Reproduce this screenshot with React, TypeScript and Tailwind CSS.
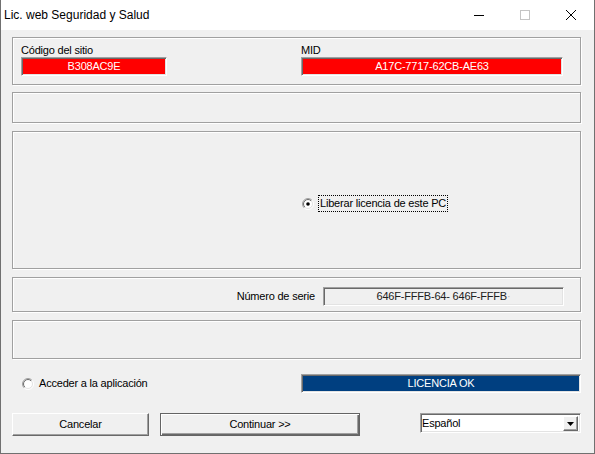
import React from 'react';

const FONT = { fontFamily: '"Liberation Sans", Arial, sans-serif' };

// classic 12px radio button
function Radio({ checked, id }: { checked?: boolean; id: string }) {
  return (
    <svg width="12" height="12" viewBox="0 0 12 12" className="shrink-0">
      <defs>
        <linearGradient id={`o${id}`} x1="0" y1="0" x2="1" y2="1">
          <stop offset="0.45" stopColor="#a0a0a0" />
          <stop offset="0.55" stopColor="#ffffff" />
        </linearGradient>
        <linearGradient id={`i${id}`} x1="0" y1="0" x2="1" y2="1">
          <stop offset="0.45" stopColor="#696969" />
          <stop offset="0.55" stopColor="#e3e3e3" />
        </linearGradient>
      </defs>
      <circle cx="6" cy="6" r="5.5" fill="none" stroke={`url(#o${id})`} />
      <circle cx="6" cy="6" r="4.5" fill="#fff" stroke={`url(#i${id})`} />
      {checked && <circle cx="6" cy="6" r="1.8" fill="#000" />}
    </svg>
  );
}

// sunken field: gray top/left, white bottom/right
const sunken =
  'border border-t-[#a0a0a0] border-l-[#a0a0a0] border-b-white border-r-white shadow-[inset_1px_1px_0_#696969,inset_-1px_-1px_0_#e3e3e3]';

const groupBox =
  'ml-[11px] w-[569px] border border-[#a0a0a0] shadow-[inset_1px_1px_0_#fff,1px_1px_0_#fff]';

export default function App() {
  return (
    <div
      className="w-[595px] h-[454px] flex flex-col bg-[#f0f0f0] border-l border-r border-b border-[#707070] text-[11px] tracking-[-0.2px] text-black overflow-hidden"
      style={FONT}
    >
      {/* title bar */}
      <div className="h-[30px] shrink-0 bg-white flex items-center">
        <span className="pl-[3px] text-[12px] tracking-normal">Lic. web Seguridad y Salud</span>
        <div className="ml-auto flex h-full">
          <div className="w-[46px] flex items-center justify-center">
            <div className="w-[10px] h-px bg-black" />
          </div>
          <div className="w-[46px] flex items-center justify-center">
            <div className="w-[10px] h-[10px] border border-[#c4c4c4]" />
          </div>
          <div className="w-[46px] flex items-center justify-center">
            <svg width="10" height="10" viewBox="0 0 10 10">
              <path d="M0 0L10 10M10 0L0 10" stroke="#000" strokeWidth="1" />
            </svg>
          </div>
        </div>
      </div>

      {/* site code / MID */}
      <div className={`${groupBox} mt-[7px] h-[48px] pt-[6px] pl-[8px] flex`}>
        <div className="w-[280px] flex flex-col">
          <span className="leading-[13px]">Código del sitio</span>
          <div className={`${sunken} w-[146px] h-[19px] bg-[#ff0000] text-white flex items-center justify-center`}>
            B308AC9E
          </div>
        </div>
        <div className="flex flex-col">
          <span className="leading-[13px]">MID</span>
          <div className={`${sunken} w-[262px] h-[19px] bg-[#ff0000] text-white flex items-center justify-center`}>
            A17C-7717-62CB-AE63
          </div>
        </div>
      </div>

      <div className={`${groupBox} mt-[7px] h-[31px]`} />

      {/* release licence */}
      <div className={`${groupBox} mt-[8px] h-[138px] pt-[63px] pl-[289px]`}>
        <div className="flex items-center gap-[4px]">
          <Radio checked id="a" />
          <span className="h-[17px] px-[1px] flex items-center border border-dotted border-black leading-none">
            Liberar licencia de este PC
          </span>
        </div>
      </div>

      {/* serial */}
      <div className={`${groupBox} mt-[8px] h-[35px] pt-[9px] pr-[16px] flex justify-end items-start gap-[8px]`}>
        <span className="h-[19px] flex items-center">Número de serie</span>
        <div className={`${sunken} w-[241px] h-[19px] flex items-center justify-center text-[#202020]`}>
          646F-FFFB-64- 646F-FFFB<span className="text-[#b0b0b0]">·</span>
        </div>
      </div>

      <div className={`${groupBox} mt-[8px] h-[39px]`} />

      {/* access + status */}
      <div className="mt-[15px] ml-[11px] w-[569px] h-[19px] flex items-center">
        <div className="ml-[10px] flex items-center gap-[5px]">
          <Radio id="b" />
          <span>Acceder a la aplicación</span>
        </div>
        <div className={`${sunken} ml-auto w-[280px] h-[19px] bg-[#003f80] text-white flex items-center justify-center`}>
          LICENCIA OK
        </div>
      </div>

      {/* buttons */}
      <div className="mt-[20px] ml-[11px] w-[569px] flex items-start">
        <button className="w-[137px] h-[23px] bg-[#f0f0f0] border border-t-white border-l-white border-b-[#696969] border-r-[#696969] shadow-[inset_-1px_-1px_0_#a0a0a0] flex items-center justify-center">
          Cancelar
        </button>
        <button className="ml-[11px] w-[200px] h-[23px] bg-[#f0f0f0] border border-[#646464] shadow-[inset_1px_1px_0_#fff,inset_-1px_-1px_0_#696969,inset_-2px_-2px_0_#a0a0a0] flex items-center justify-center">
          Continuar &gt;&gt;
        </button>
        <div className={`${sunken} ml-auto w-[161px] h-[20px] bg-white flex items-start pt-[2px] pr-[2px]`}>
          <span className="pl-[1px] leading-[15px]">Español</span>
          <div className="ml-auto w-[15px] h-[15px] bg-[#f0f0f0] border border-t-white border-l-white border-b-[#696969] border-r-[#696969] shadow-[inset_-1px_-1px_0_#a0a0a0] flex items-center justify-center">
            <svg width="7" height="4" viewBox="0 0 7 4">
              <path d="M0 0H7L3.5 4Z" fill="#000" />
            </svg>
          </div>
        </div>
      </div>
    </div>
  );
}
